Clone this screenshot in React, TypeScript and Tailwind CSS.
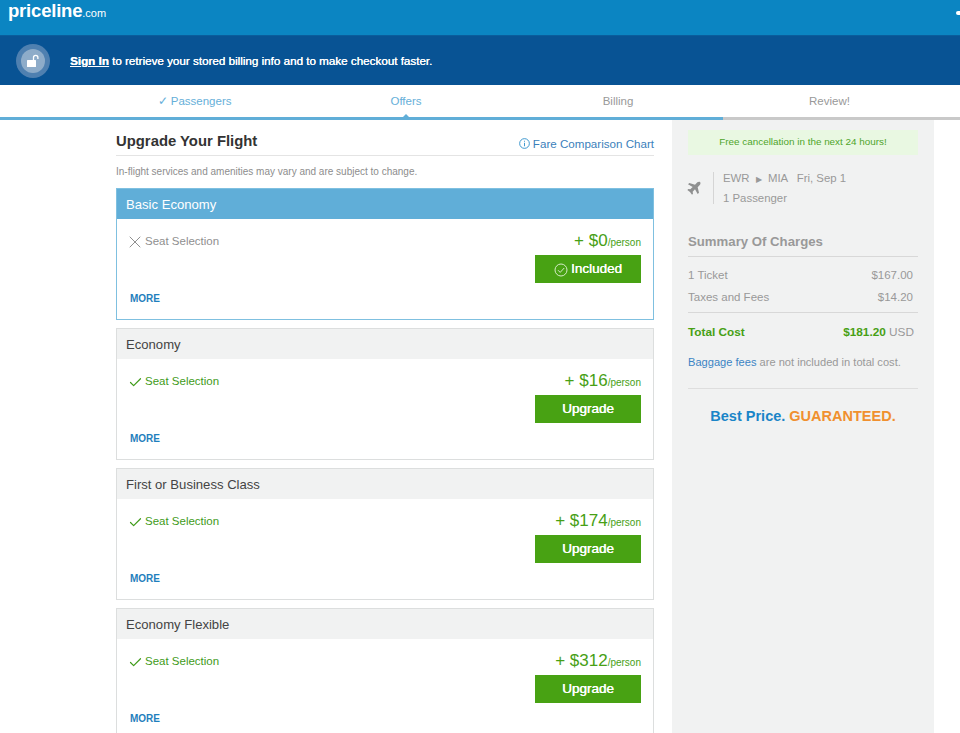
import { Check, X } from "lucide-react";

const font = { fontFamily: '"Liberation Sans", Arial, sans-serif' };

type Fare = { name: string; price: number; included?: boolean };

const fares: Fare[] = [
  { name: "Basic Economy", price: 0, included: true },
  { name: "Economy", price: 16 },
  { name: "First or Business Class", price: 174 },
  { name: "Economy Flexible", price: 312 },
];

function FareCard({ fare }: { fare: Fare }) {
  const active = fare.included;
  return (
    <div className={`border ${active ? "border-[#7fc0e0]" : "border-[#dcdede]"} h-[132px] shrink-0 bg-white`}>
      <div className={`h-[30px] pt-[1px] flex items-center px-[9px] text-[13.1px] ${active ? "bg-[#60aed8] text-white" : "bg-[#f1f2f2] text-[#444]"}`}>
        {fare.name}
      </div>
      <div className="flex justify-between pl-[12px] pr-[12px]">
        <div className="flex flex-col">
          <div className={`flex items-center mt-[13px] h-[20px] ${active ? "text-[#8f8f8f]" : "text-[#3f9b1a]"}`}>
            <div className="w-[16px] h-[16px] flex items-center">
              {active ? (
                <X size={20} strokeWidth={1.2} color="#8f8f8f" className="-ml-[4px] shrink-0" />
              ) : (
                <Check size={15} strokeWidth={1.9} color="#3f9b1a" className="-ml-[1px] shrink-0" />
              )}
            </div>
            <span className="text-[11.5px]">Seat Selection</span>
          </div>
          <a className="mt-[39px] ml-[1px] text-[10px] font-bold text-[#1f7fbd]">MORE</a>
        </div>
        <div className="flex flex-col items-end mt-[9px]">
          <div className="flex items-baseline h-[22px] text-[#47a015]">
            <span className="text-[17px]">+ ${fare.price}</span>
            <span className="text-[10px]">/person</span>
          </div>
          <button className="mt-[5px] w-[106px] h-[28px] pt-[1px] bg-[#48a213] text-white text-[13.5px] font-normal flex items-center justify-center gap-[3px] [text-shadow:0.3px_0_0_#fff]">
            {active && (
              <svg width="14" height="14" viewBox="0 0 14 14" fill="none" stroke="#d5ecc8" strokeWidth="1">
                <circle cx="7" cy="7" r="6" />
                <path d="M4 7.2l2.2 2.2L10.2 5" />
              </svg>
            )}
            {active ? "Included" : "Upgrade"}
          </button>
        </div>
      </div>
    </div>
  );
}

export default function App() {
  return (
    <div style={font} className="w-[960px] h-[733px] overflow-hidden bg-white">
      {/* top bar */}
      <div className="h-[35px] bg-[#0b85c2] relative overflow-hidden">
        <div className="pl-[8px] flex items-baseline text-white leading-none pt-[2px]">
          <span className="text-[18.5px] font-bold tracking-[-0.2px]">priceline</span>
          <span className="text-[11px]">.com</span>
        </div>
        <div className="absolute right-0 top-[11px] w-[4px] h-[4px] bg-white rounded-l-full" />
      </div>
      {/* sign in band */}
      <div className="h-[50px] bg-[#085394] flex items-center pl-[16px] border-t border-[#0a5d9c]">
        <div className="w-[34px] h-[34px] rounded-full bg-[#4f80b0] flex items-center justify-center">
          <div className="w-[24px] h-[24px] rounded-full bg-[#8eacc9] flex items-center justify-center">
            <svg width="16" height="16" viewBox="0 0 16 16">
              <rect x="2" y="7" width="9" height="7" rx="0.5" fill="#fff" />
              <path d="M8.5 7V4.5a2.2 2.2 0 0 1 4.4 0V6" fill="none" stroke="#fff" strokeWidth="1.3" />
            </svg>
          </div>
        </div>
        <div className="ml-[20px] text-white text-[11.65px] [text-shadow:0.2px_0_0_#fff]">
          <a className="font-bold underline">Sign In</a> to retrieve your stored billing info and to make checkout faster.
        </div>
      </div>
      {/* steps */}
      <div className="h-[32px] pt-[1px] grid grid-cols-[211px_212px_212px_211px] pl-[89px] text-[11.5px] items-center">
        <div className="text-center text-[#66afd9] whitespace-nowrap">✓ Passengers</div>
        <div className="text-center text-[#66afd9]">Offers</div>
        <div className="text-center text-[#999]">Billing</div>
        <div className="text-center text-[#999]">Review!</div>
      </div>
      <div className="h-[3px] bg-[#c9c9c9] relative">
        <div className="h-[3px] w-[723px] bg-[#60aed8]" />
        <div className="absolute left-[403px] top-[-3px] w-0 h-0 border-x-[3px] border-x-transparent border-b-[3px] border-b-[#60aed8]" />
      </div>
      {/* content */}
      <div className="flex pl-[116px]">
        <div className="w-[538px] flex flex-col">
          <div className="h-[36px] flex justify-between items-end border-b border-[#e4e4e4]">
            <h1 className="text-[14.85px] font-bold text-[#333] leading-[22px] pb-[3px]">Upgrade Your Flight</h1>
            <a className="text-[11.6px] text-[#3b7fbb] flex items-center gap-[3px] pb-[3px]">
              <svg width="11" height="11" viewBox="0 0 12 12" fill="none" stroke="#2f8fcb" strokeWidth="1">
                <circle cx="6" cy="6" r="5.3" />
                <path d="M6 5.2V9M6 3v1.1" />
              </svg>
              Fare Comparison Chart
            </a>
          </div>
          <p className="text-[10px] text-[#8d8d8d] mt-[10px] leading-[12px]">In-flight services and amenities may vary and are subject to change.</p>
          <div className="mt-[10px] flex flex-col gap-[8px]">
            {fares.map((f) => (
              <FareCard key={f.name} fare={f} />
            ))}
          </div>
        </div>
        {/* sidebar */}
        <aside className="ml-[18px] w-[262px] h-[613px] bg-[#f1f2f2] px-[16px] pt-[10px]">
          <div className="h-[25px] bg-[#e9f8e2] text-[#4ea52a] text-[9.9px] flex items-center justify-center">Free cancellation in the next 24 hours!</div>
          <div className="flex items-center mt-[17px] h-[32px]">
            <svg width="16" height="16" viewBox="0 0 24 24" fill="#8f9090" className="-ml-[2px]">
              <path d="M21 3c-1-1-3-.5-4 .5L13.5 7 5 4.5 3 6.5 10 10.5 6.5 14l-3-.5L2 15l4 3 3 4 1.5-1.5-.5-3 3.5-3.5 4 7 2-2L17.5 11 21 7c1-1 1-3 0-4z" />
            </svg>
            <div className="ml-[11px] pl-[9px] border-l border-[#d5d5d5] text-[11.4px] text-[#999] h-[32px] flex flex-col justify-center">
              <div className="whitespace-nowrap h-[20px] leading-[20px] shrink-0">
                EWR <span className="text-[8px] mx-[3px]">▶</span> MIA <span className="ml-[6px]">Fri, Sep 1</span>
              </div>
              <div className="h-[20px] leading-[20px] shrink-0">1 Passenger</div>
            </div>
          </div>
          <h2 className="mt-[29px] text-[13.2px] font-bold text-[#999] leading-[18px] pb-[5px] border-b border-[#d8d8d8]">Summary Of Charges</h2>
          <div className="mt-[8px] text-[11.5px] text-[#999] pr-[5px]">
            <div className="flex justify-between h-[22px] items-center"><span>1 Ticket</span><span>$167.00</span></div>
            <div className="flex justify-between h-[22px] items-center"><span>Taxes and Fees</span><span>$14.20</span></div>
          </div>
          <div className="border-t border-[#d8d8d8] mt-[3px] pt-[9px] flex justify-between text-[11.8px] pr-[4px] leading-[20px]">
            <span className="font-bold text-[#47a015]">Total Cost</span>
            <span className="text-[#999]"><span className="font-bold text-[#47a015]">$181.20</span> USD</span>
          </div>
          <p className="mt-[13px] text-[11.1px] text-[#999] leading-[14px] whitespace-nowrap"><a className="text-[#3b84c4]">Baggage fees</a> are not included in total cost.</p>
          <div className="mt-[19px] border-t border-[#dedede] pt-[17px] text-center text-[14.5px] font-bold leading-[20px] whitespace-nowrap">
            <span className="text-[#1a85c8]">Best Price.</span> <span className="text-[#f0902f]">GUARANTEED.</span>
          </div>
        </aside>
      </div>
    </div>
  );
}
